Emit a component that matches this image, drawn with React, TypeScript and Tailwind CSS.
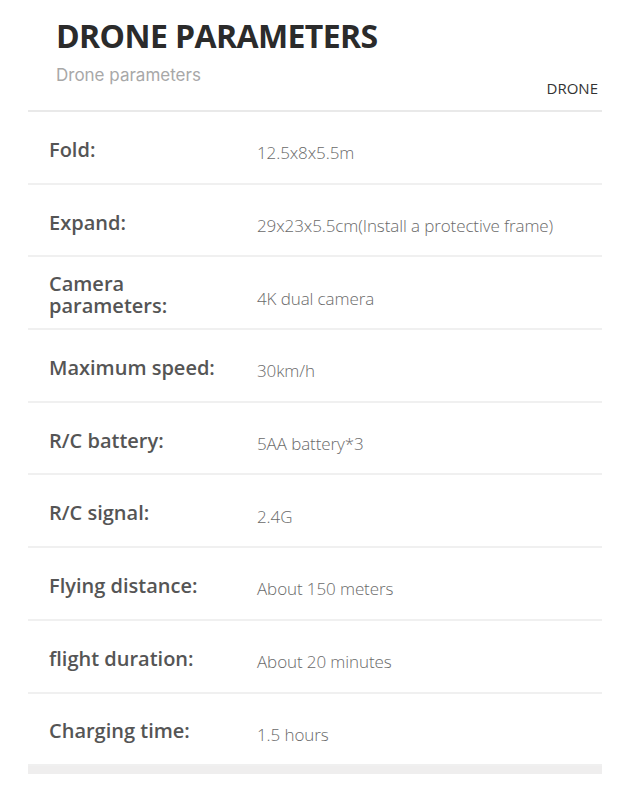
import React from "react";

const rows: { label: React.ReactNode; value: string }[] = [
  { label: "Fold:", value: "12.5x8x5.5m" },
  { label: "Expand:", value: "29x23x5.5cm(Install a protective frame)" },
  {
    label: (
      <>
        Camera
        <br />
        parameters:
      </>
    ),
    value: "4K dual camera",
  },
  { label: "Maximum speed:", value: "30km/h" },
  { label: "R/C battery:", value: "5AA battery*3" },
  { label: "R/C signal:", value: "2.4G" },
  { label: "Flying distance:", value: "About 150 meters" },
  { label: "flight duration:", value: "About 20 minutes" },
  { label: "Charging time:", value: "1.5 hours" },
];

const App: React.FC = () => {
  return (
    <div className="w-[638px] h-[800px] bg-white font-['Open_Sans',sans-serif] overflow-hidden">
      {/* header */}
      <div className="relative h-[110px]">
        <div className="pl-[56px] pt-[16px] text-[32px] leading-[40px] font-bold text-[#2b2b2b] tracking-[-0.6px]">
          DRONE PARAMETERS
        </div>
        <div className="pl-[56px] pt-[8px] text-[17px] leading-[22px] text-[#a8a8a8] font-['Inter',sans-serif]">
          Drone parameters
        </div>
        <div className="absolute right-[40px] top-[78px] text-[15px] leading-[20px] text-[#333]">
          DRONE
        </div>
      </div>

      <div className="ml-[28px] w-[574px] border-t-2 border-[#e9e9e9]">
        {rows.map((r, i) => (
          <div
            key={i}
            className="flex items-center h-[72.7px] border-b-2 border-[#f0f0f0]"
          >
            <div className="w-[229px] pl-[21px] pt-[5px] text-[20px] leading-[22px] font-semibold text-[#555]">
              {r.label}
            </div>
            <div className="pt-[12px] text-[17px] leading-[22px] font-light text-[#6a6a6a] tracking-[-0.1px]">
              {r.value}
            </div>
          </div>
        ))}
        <div className="h-[8px] bg-[#efeeee]" />
      </div>
    </div>
  );
};

export default App;
